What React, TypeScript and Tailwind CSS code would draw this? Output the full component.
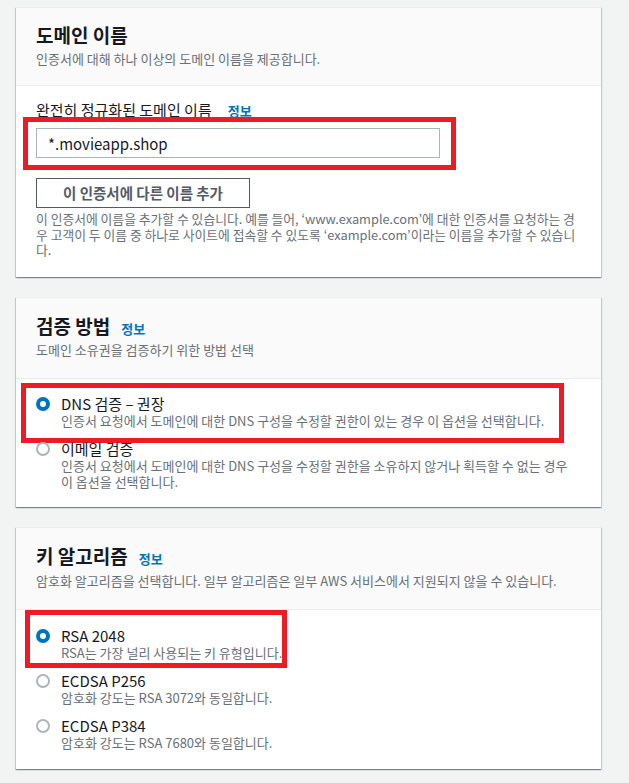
import React from 'react';

const font = { fontFamily: '"Noto Sans CJK KR", "Noto Sans", sans-serif' };

type Opt = { label: string; desc: string; checked?: boolean };

const Radio = ({ checked }: { checked?: boolean }) =>
  checked ? (
    <span className="mt-[3px] flex h-[14px] w-[14px] shrink-0 items-center justify-center rounded-full bg-[#0073bb]">
      <span className="h-[6px] w-[6px] rounded-full bg-white" />
    </span>
  ) : (
    <span className="mt-[3px] h-[14px] w-[14px] shrink-0 rounded-full border-2 border-[#aab7b8] bg-white" />
  );

const Info = ({ className }: { className?: string }) => (
  <span className={'text-[13px] font-bold text-[#0073bb] ' + (className ?? '')}>정보</span>
);

const Card = ({
  title,
  desc,
  info,
  children,
  bodyClass,
}: {
  title: string;
  desc: string;
  info?: boolean;
  children: React.ReactNode;
  bodyClass: string;
}) => (
  <section className="border-t border-[#eaeded] bg-white shadow-[0_1px_1px_0_rgba(0,28,36,0.3),1px_1px_1px_0_rgba(0,28,36,0.15),-1px_1px_1px_0_rgba(0,28,36,0.15)]">
    {/* 헤더 */}
    <div className={'border-b border-[#eaeded] bg-[#fafafa] px-[20px] ' + (info ? 'pt-[16px] pb-[20px]' : 'pt-[16px] pb-[18px]')}>
      <div className="flex items-baseline">
        <h2 className={'text-[19px] font-bold text-[#16191f] ' + (info ? 'leading-[24px]' : 'leading-[22px]')}>{title}</h2>
        {info && <Info className="ml-[11px]" />}
      </div>
      <p className={'text-[13px] leading-[16px] text-[#687078] ' + (info ? 'mt-[4px]' : 'mt-[5px]')}>{desc}</p>
    </div>
    <div className={'px-[20px] ' + bodyClass}>{children}</div>
  </section>
);

const Options = ({ items, mark }: { items: Opt[]; mark: string }) => (
  <div className="flex flex-col gap-[10px]">
    {items.map((o, i) => (
      <div key={o.label} className="relative flex gap-[11px]">
        <Radio checked={o.checked} />
        <div>
          <div className="text-[15px] leading-[19px] text-[#16191f]">{o.label}</div>
          <div className="text-[13px] leading-[16px] text-[#687078]">{o.desc}</div>
        </div>
        {i === 0 && <div className={'pointer-events-none absolute border-[5px] border-[#ed1c24] ' + mark} />}
      </div>
    ))}
  </div>
);

export default function App() {
  return (
    <div style={font} className="min-h-[783px] bg-[#f2f3f3] pt-[7px] pl-[16px] pr-[28px] pb-[12px]">
      <div className="flex flex-col gap-[20px]">
        {/* 도메인 이름 */}
        <Card title="도메인 이름" desc="인증서에 대해 하나 이상의 도메인 이름을 제공합니다." bodyClass="pt-[14px] pb-[19px]">
          <div className="flex items-baseline text-[15px] leading-[20px] text-[#16191f]">
            완전히 정규화된 도메인 이름
            <Info className="ml-[16px]" />
          </div>
          <div className="relative mt-[7px] w-[404px]">
            <input
              readOnly
              value="*.movieapp.shop"
              className="h-[30px] w-full border border-[#aab7b8] bg-white px-[11px] text-[15px] text-[#16191f] outline-none"
            />
            <div className="pointer-events-none absolute top-[-11px] left-[-13px] right-[-16px] bottom-[-12px] border-[5px] border-[#ed1c24]" />
          </div>
          <button className="mt-[20px] h-[30px] w-[214px] border border-[#545b64] bg-white text-[14.5px] font-bold text-[#545b64]">
            이 인증서에 다른 이름 추가
          </button>
          <p className="mt-[3px] break-all text-[12.8px] leading-[15.5px] text-[#687078]">
            이 인증서에 이름을 추가할 수 있습니다. 예를 들어, ‘www.example.com’에 대한 인증서를 요청하는 경우 고객이 두 이름 중 하나로 사이트에 접속할 수 있도록 ‘example.com’이라는 이름을 추가할 수 있습니다.
          </p>
        </Card>

        {/* 검증 방법 */}
        <Card title="검증 방법" desc="도메인 소유권을 검증하기 위한 방법 선택" info bodyClass="pt-[15px] pb-[17px]">
          <Options
            mark="top-[-11px] left-[-15px] right-[17px] bottom-[-14px]"
            items={[
              { label: 'DNS 검증 – 권장', desc: '인증서 요청에서 도메인에 대한 DNS 구성을 수정할 권한이 있는 경우 이 옵션을 선택합니다.', checked: true },
              { label: '이메일 검증', desc: '인증서 요청에서 도메인에 대한 DNS 구성을 수정할 권한을 소유하지 않거나 획득할 수 없는 경우 이 옵션을 선택합니다.' },
            ]}
          />
        </Card>

        {/* 키 알고리즘 */}
        <Card title="키 알고리즘" desc="암호화 알고리즘을 선택합니다. 일부 알고리즘은 일부 AWS 서비스에서 지원되지 않을 수 있습니다." info bodyClass="pt-[16px] pb-[18px]">
          <Options
            mark="top-[-16px] left-[-11px] right-[294px] bottom-[-7px]"
            items={[
              { label: 'RSA 2048', desc: 'RSA는 가장 널리 사용되는 키 유형입니다.', checked: true },
              { label: 'ECDSA P256', desc: '암호화 강도는 RSA 3072와 동일합니다.' },
              { label: 'ECDSA P384', desc: '암호화 강도는 RSA 7680와 동일합니다.' },
            ]}
          />
        </Card>
      </div>
    </div>
  );
}
